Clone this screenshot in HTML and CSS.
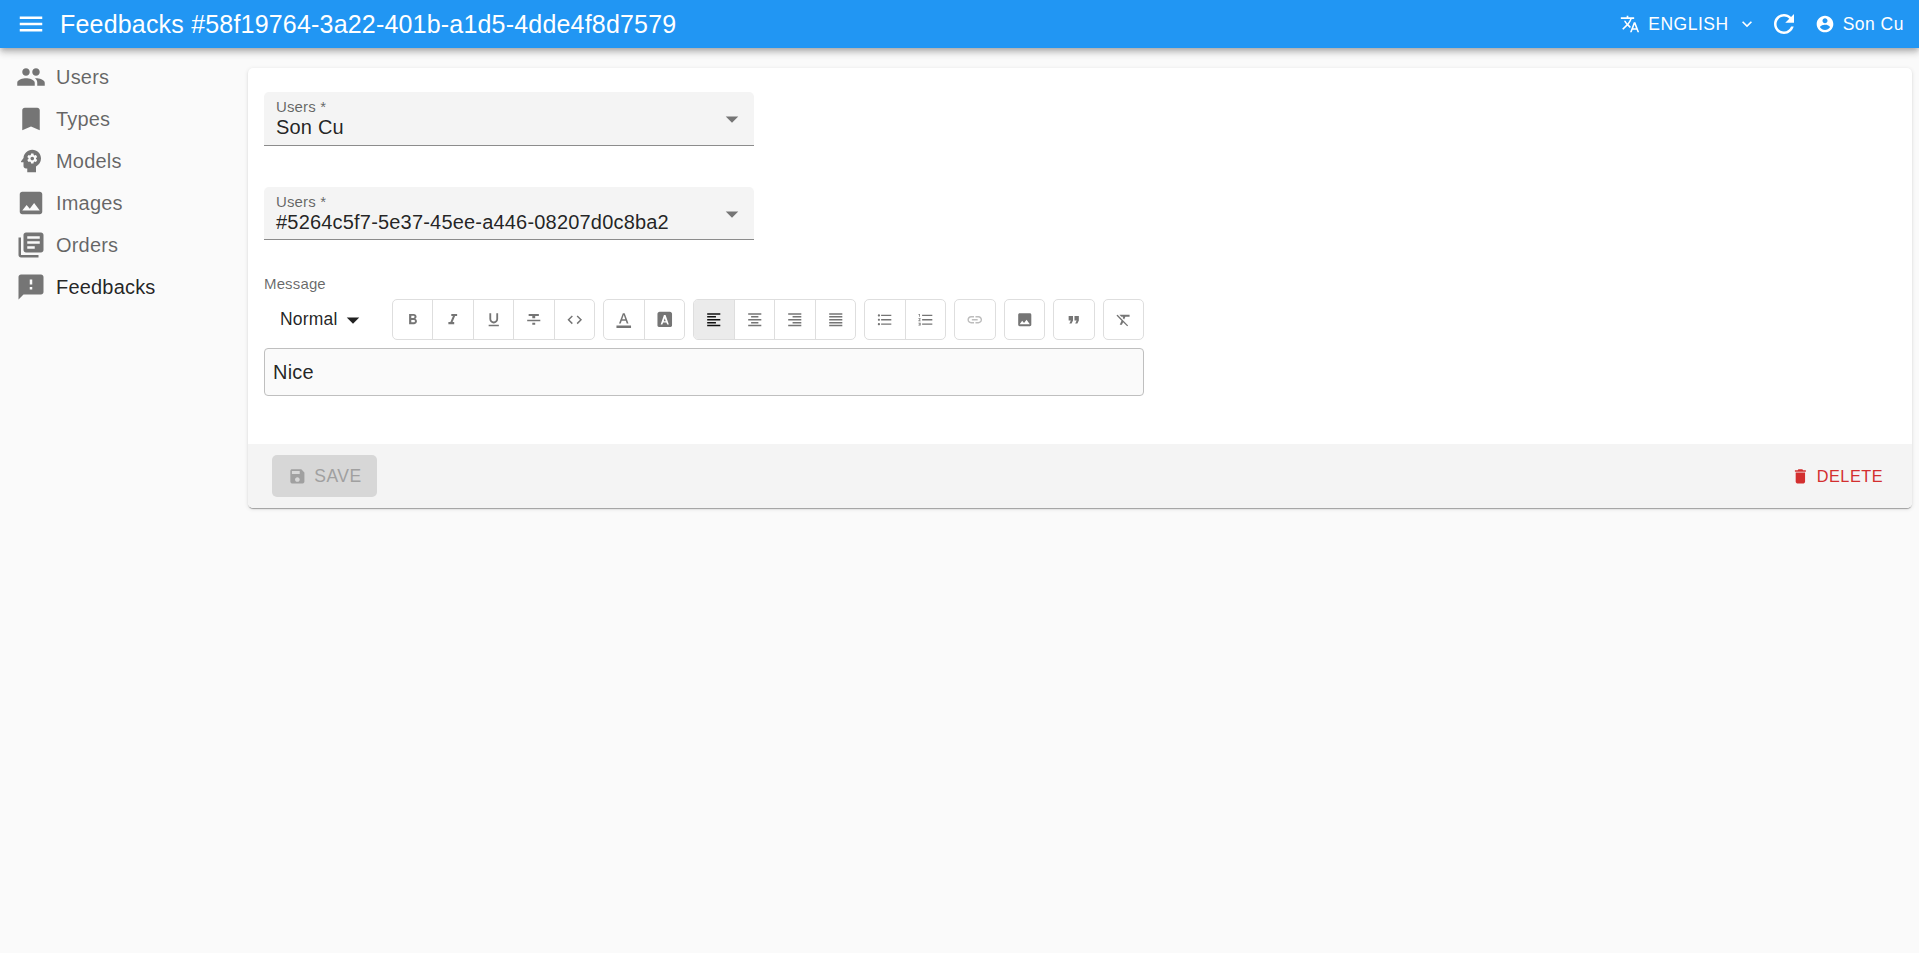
FILE: index.html
```html
<!DOCTYPE html>
<html lang="en">
<head>
<meta charset="utf-8">
<title>Feedbacks</title>
<link rel="stylesheet" href="styles.css">
</head>
<body>
<header class="appbar">
  <svg class="icon icon-lg" viewBox="0 0 24 24"><path d="M3 18h18v-2H3v2zm0-5h18v-2H3v2zm0-7v2h18V6H3z"/></svg>
  <h1 class="title">Feedbacks #58f19764-3a22-401b-a1d5-4dde4f8d7579</h1>
  <div class="language">
    <svg class="icon icon-md" viewBox="0 0 24 24"><path d="M12.87 15.07l-2.54-2.51.03-.03c1.74-1.94 2.98-4.17 3.71-6.53H17V4h-7V2H8v2H1v1.99h11.17C11.5 7.92 10.44 9.75 9 11.35 8.07 10.32 7.3 9.19 6.69 8h-2c.73 1.63 1.73 3.17 2.98 4.56l-5.09 5.02L4 19l5-5 3.11 3.11zM18.5 10h-2L12 22h2l1.12-3h4.75L21 22h2zm-2.62 7l1.62-4.33L19.12 17z"/></svg>
    <span>ENGLISH</span>
    <svg class="icon icon-md" viewBox="0 0 24 24"><path d="M16.59 8.59L12 13.17 7.41 8.59 6 10l6 6 6-6z"/></svg>
  </div>
  <svg class="icon icon-lg refresh" viewBox="0 0 24 24"><path d="M17.65 6.35C16.2 4.9 14.21 4 12 4c-4.42 0-7.99 3.58-7.99 8s3.57 8 7.99 8c3.73 0 6.84-2.55 7.73-6h-2.08c-.82 2.33-3.04 4-5.65 4-3.31 0-6-2.69-6-6s2.69-6 6-6c1.66 0 3.14.69 4.22 1.78L13 11h7V4z"/></svg>
  <div class="account">
    <svg class="icon icon-md" viewBox="0 0 24 24"><path d="M12 2C6.48 2 2 6.48 2 12s4.48 10 10 10 10-4.48 10-10S17.52 2 12 2zm0 3c1.66 0 3 1.34 3 3s-1.34 3-3 3-3-1.34-3-3 1.34-3 3-3zm0 14.2c-2.5 0-4.71-1.28-6-3.22.03-1.99 4-3.08 6-3.08 1.99 0 5.97 1.09 6 3.08-1.29 1.94-3.5 3.22-6 3.22z"/></svg>
    <span>Son Cu</span>
  </div>
</header>
<div class="layout">
  <nav class="sidebar">
    <a class="nav-item"><svg class="icon icon-lg" viewBox="0 0 24 24"><path d="M16 11c1.66 0 2.99-1.34 2.99-3S17.66 5 16 5c-1.66 0-3 1.34-3 3s1.34 3 3 3zm-8 0c1.66 0 2.99-1.34 2.99-3S9.66 5 8 5C6.34 5 5 6.34 5 8s1.34 3 3 3zm0 2c-2.33 0-7 1.17-7 3.5V19h14v-2.5c0-2.33-4.67-3.5-7-3.5zm8 0c-.29 0-.62.02-.97.05 1.16.84 1.97 1.97 1.97 3.45V19h6v-2.5c0-2.33-4.67-3.5-7-3.5z"/></svg><span>Users</span></a>
    <a class="nav-item"><svg class="icon icon-lg" viewBox="0 0 24 24"><path d="M17 3H7c-1.1 0-1.99.9-1.99 2L5 21l7-3 7 3V5c0-1.1-.9-2-2-2z"/></svg><span>Types</span></a>
    <a class="nav-item"><svg class="icon icon-lg" viewBox="0 0 24 24"><path d="M13 8.57c-.79 0-1.43.64-1.43 1.43s.64 1.43 1.43 1.43 1.43-.64 1.43-1.43-.64-1.43-1.43-1.43z"/><path d="M13 3C9.25 3 6.2 5.94 6.02 9.64L4.1 12.2c-.25.33-.01.8.4.8H6v3c0 1.1.9 2 2 2h1v3h7v-4.68c2.36-1.12 4-3.53 4-6.32 0-3.87-3.13-7-7-7zm3 7c0 .13-.01.26-.02.39l.83.66c.08.06.1.16.05.25l-.8 1.39c-.05.09-.16.12-.24.09l-.99-.4c-.21.16-.43.29-.67.39L14 13.83c-.01.1-.1.17-.2.17h-1.6c-.1 0-.18-.07-.2-.17l-.15-1.06c-.25-.1-.47-.23-.68-.39l-.99.4c-.09.03-.2 0-.25-.09l-.8-1.39c-.05-.08-.03-.19.05-.25l.84-.66c-.01-.13-.02-.26-.02-.39s.02-.27.04-.39l-.85-.66c-.08-.06-.1-.16-.05-.26l.8-1.38c.05-.09.15-.12.24-.09l1 .4c.2-.15.43-.29.67-.39L12 6.17c.02-.1.1-.17.2-.17h1.6c.1 0 .18.07.2.17l.15 1.06c.24.1.46.23.67.39l1-.4c.09-.03.2 0 .24.09l.8 1.38c.05.09.03.2-.05.26l-.85.66c.03.12.04.25.04.39z"/></svg><span>Models</span></a>
    <a class="nav-item"><svg class="icon icon-lg" viewBox="0 0 24 24"><path d="M21 19V5c0-1.1-.9-2-2-2H5c-1.1 0-2 .9-2 2v14c0 1.1.9 2 2 2h14c1.1 0 2-.9 2-2zM8.5 13.5l2.5 3.01L14.5 12l4.5 6H5z"/></svg><span>Images</span></a>
    <a class="nav-item"><svg class="icon icon-lg" viewBox="0 0 24 24"><path d="M4 6H2v14c0 1.1.9 2 2 2h14v-2H4zm16-4H8c-1.1 0-2 .9-2 2v12c0 1.1.9 2 2 2h12c1.1 0 2-.9 2-2V4c0-1.1-.9-2-2-2zm-1 9H9V9h10zm-4 4H9v-2h6zm4-8H9V5h10z"/></svg><span>Orders</span></a>
    <a class="nav-item active"><svg class="icon icon-lg" viewBox="0 0 24 24"><path d="M20 2H4c-1.1 0-1.99.9-1.99 2L2 22l4-4h14c1.1 0 2-.9 2-2V4c0-1.1-.9-2-2-2zm-7 12h-2v-2h2zm0-4h-2V6h2z"/></svg><span>Feedbacks</span></a>
  </nav>
  <main class="card">
    <div class="form">
      <div class="field">
        <div class="field-text"><label>Users *</label><span class="value">Son Cu</span></div>
        <svg class="icon icon-lg" viewBox="0 0 24 24"><path d="M7 10l5 5 5-5z"/></svg>
      </div>
      <div class="field field-second">
        <div class="field-text"><label>Users *</label><span class="value">#5264c5f7-5e37-45ee-a446-08207d0c8ba2</span></div>
        <svg class="icon icon-lg" viewBox="0 0 24 24"><path d="M7 10l5 5 5-5z"/></svg>
      </div>
      <div class="message-label">Message</div>
      <div class="tools">
        <div class="format"><span>Normal</span><svg class="icon icon-lg" viewBox="0 0 24 24"><path d="M7 10l5 5 5-5z"/></svg></div>
        <div class="group w5">
          <button><svg class="icon" viewBox="0 0 24 24"><path d="M15.6 10.79c.97-.67 1.65-1.77 1.65-2.79 0-2.26-1.75-4-4-4H7v14h7.04c2.09 0 3.71-1.7 3.71-3.79 0-1.52-.86-2.82-2.15-3.42zM10 6.5h3c.83 0 1.5.67 1.5 1.5s-.67 1.5-1.5 1.5h-3zm3.5 9H10v-3h3.5c.83 0 1.5.67 1.5 1.5s-.67 1.5-1.5 1.5z"/></svg></button>
          <button><svg class="icon" viewBox="0 0 24 24"><path d="M10 4v3h2.21l-3.42 8H6v3h8v-3h-2.21l3.42-8H18V4z"/></svg></button>
          <button><svg class="icon" viewBox="0 0 24 24"><path d="M12 17c3.31 0 6-2.69 6-6V3h-2.5v8c0 1.93-1.57 3.5-3.5 3.5S8.5 12.93 8.5 11V3H6v8c0 3.31 2.69 6 6 6zm-7 2v2h14v-2z"/></svg></button>
          <button><svg class="icon" viewBox="0 0 24 24"><path d="M10 19h4v-3h-4zM5 4v3h5v3h4V7h5V4zM3 14h18v-2H3z"/></svg></button>
          <button><svg class="icon" viewBox="0 0 24 24"><path d="M9.4 16.6L4.8 12l4.6-4.6L8 6l-6 6 6 6zm5.2 0l4.6-4.6-4.6-4.6L16 6l6 6-6 6z"/></svg></button>
        </div>
        <div class="group w2">
          <button><svg class="icon" viewBox="0 0 24 24"><path d="M2 20h20v4H2zM5.490 17h2.420l1.270-3.580h5.650L16.090 17h2.420L13.250 3h-2.500zm4.420-5.610l2.030-5.790h.12l2.030 5.790z"/></svg></button>
          <button><svg class="icon" viewBox="0 0 24 24"><path d="M10.630 14h2.740L12 9.800zM19 1H5C3.340 1 2 2.340 2 4v16c0 1.100.9 2 2 2h16c1.100 0 2-.9 2-2V4c0-1.660-1.340-3-3-3zm-3.500 17.500L14.200 15.700H9.800l-1.100 2.800H6.400L10.900 5.500h2.200l4.500 13z"/></svg></button>
        </div>
        <div class="group w4">
          <button class="selected"><svg class="icon" viewBox="0 0 24 24"><path d="M15 15H3v2h12zm0-8H3v2h12zM3 13h18v-2H3zm0 8h18v-2H3zM3 3v2h18V3z"/></svg></button>
          <button><svg class="icon" viewBox="0 0 24 24"><path d="M7 15v2h10v-2zm-4 6h18v-2H3zm0-8h18v-2H3zm4-6v2h10V7zM3 3v2h18V3z"/></svg></button>
          <button><svg class="icon" viewBox="0 0 24 24"><path d="M3 21h18v-2H3zm6-4h12v-2H9zm-6-4h18v-2H3zm6-4h12V7H9zM3 3v2h18V3z"/></svg></button>
          <button><svg class="icon" viewBox="0 0 24 24"><path d="M3 21h18v-2H3zm0-4h18v-2H3zm0-4h18v-2H3zm0-4h18V7H3zm0-6v2h18V3z"/></svg></button>
        </div>
        <div class="group w2">
          <button><svg class="icon" viewBox="0 0 24 24"><path d="M4 10.5c-.83 0-1.5.67-1.5 1.5s.67 1.5 1.5 1.5 1.5-.67 1.5-1.5-.67-1.5-1.5-1.5zm0-6c-.83 0-1.5.67-1.5 1.5S3.17 7.5 4 7.5 5.5 6.83 5.5 6 4.83 4.5 4 4.5zm0 12c-.83 0-1.5.68-1.5 1.5s.68 1.5 1.5 1.5 1.5-.68 1.5-1.5-.67-1.5-1.5-1.5zM7 19h14v-2H7zm0-6h14v-2H7zm0-8v2h14V5z"/></svg></button>
          <button><svg class="icon" viewBox="0 0 24 24"><path d="M2 17h2v.5H3v1h1v.5H2v1h3v-4H2zm1-9h1V4H2v1h1zm-1 3h1.8L2 13.1v.9h3v-1H3.2L5 10.9V10H2zm5-6v2h14V5zm0 14h14v-2H7zm0-6h14v-2H7z"/></svg></button>
        </div>
        <div class="group w42"><button class="disabled"><svg class="icon" viewBox="0 0 24 24"><path d="M3.9 12c0-1.71 1.39-3.1 3.1-3.1h4V7H7c-2.76 0-5 2.24-5 5s2.24 5 5 5h4v-1.9H7c-1.71 0-3.1-1.39-3.1-3.1zM8 13h8v-2H8zm9-6h-4v1.9h4c1.71 0 3.1 1.39 3.1 3.1s-1.39 3.1-3.1 3.1h-4V17h4c2.76 0 5-2.24 5-5s-2.24-5-5-5z"/></svg></button></div>
        <div class="group w41"><button><svg class="icon" viewBox="0 0 24 24"><path d="M21 19V5c0-1.1-.9-2-2-2H5c-1.1 0-2 .9-2 2v14c0 1.1.9 2 2 2h14c1.1 0 2-.9 2-2zM8.5 13.5l2.5 3.01L14.5 12l4.5 6H5z"/></svg></button></div>
        <div class="group w42"><button><svg class="icon" viewBox="0 0 24 24"><path d="M6 17h3l2-4V7H5v6h3zm8 0h3l2-4V7h-6v6h3z"/></svg></button></div>
        <div class="group w41"><button><svg class="icon" viewBox="0 0 24 24"><path d="M3.27 5L2 6.27l6.97 6.97L6.5 19h3l1.57-3.66L16.73 21 18 19.73 3.55 5.27zM6 5v.18L8.82 8h2.4l-.72 1.68 2.1 2.1L14.21 8H20V5z"/></svg></button></div>
      </div>
      <div class="editor">Nice</div>
    </div>
    <footer class="actions">
      <button class="save"><svg class="icon icon-sm" viewBox="0 0 24 24"><path d="M17 3H5c-1.11 0-2 .9-2 2v14c0 1.1.89 2 2 2h14c1.1 0 2-.9 2-2V7zm-5 16c-1.66 0-3-1.34-3-3s1.34-3 3-3 3 1.34 3 3-1.34 3-3 3zm3-10H5V5h10z"/></svg><span>SAVE</span></button>
      <button class="delete"><svg class="icon icon-sm" viewBox="0 0 24 24"><path d="M6 19c0 1.1.9 2 2 2h8c1.1 0 2-.9 2-2V7H6zM19 4h-3.5l-1-1h-5l-1 1H5v2h14z"/></svg><span>DELETE</span></button>
    </footer>
  </main>
</div>
</body>
</html>
```
FILE: styles.css
```css
* { box-sizing: border-box; }
body {
  margin: 0;
  min-height: 100vh;
  background: #fafafa;
  color: rgba(0, 0, 0, 0.87);
  font-family: "Liberation Sans", Arial, sans-serif;
  font-size: 20px;
}
button { font: inherit; color: inherit; border: 0; background: none; padding: 0; margin: 0; }
.icon { width: 17.5px; height: 17.5px; fill: currentColor; flex: none; display: block; }
.icon-sm { width: 18.75px; height: 18.75px; }
.icon-md { width: 20px; height: 20px; }
.icon-lg { width: 30px; height: 30px; }

.appbar {
  position: relative;
  height: 48px;
  display: flex;
  align-items: center;
  padding: 0 15px 0 16px;
  background: #2196f3;
  color: #fff;
  box-shadow: 0 2px 5px -1px rgba(0,0,0,.2), 0 5px 6px rgba(0,0,0,.14), 0 1px 12px rgba(0,0,0,.12);
}
.title { flex: 1; margin: 0 0 0 14px; font-size: 25px; font-weight: 400; letter-spacing: 0.19px; line-height: 40px; }
.language, .account { display: flex; align-items: center; gap: 8px; font-size: 17.5px; letter-spacing: 0.5px; }
.refresh { margin: 0 16px 0 12px; }

.layout { display: flex; align-items: flex-start; padding-right: 7px; }
.sidebar { width: 248px; padding-top: 8px; }
.nav-item {
  height: 42px;
  display: flex;
  align-items: center;
  gap: 10px;
  padding-left: 16px;
  color: rgba(0, 0, 0, 0.6);
  letter-spacing: 0.19px;
}
.nav-item .icon { color: #757575; }
.nav-item.active { color: rgba(0, 0, 0, 0.87); }

.card {
  flex: 1;
  margin-top: 20px;
  background: #fff;
  border-radius: 5px;
  box-shadow: 0 2px 1px -1px rgba(0,0,0,.2), 0 1px 1px rgba(0,0,0,.14), 0 1px 4px rgba(0,0,0,.12);
}
.form { padding: 24px 16px 48px; height: 376px; }
.field {
  width: 490px;
  height: 54px;
  display: flex;
  justify-content: space-between;
  align-items: center;
  padding: 0 7px 0 12px;
  background: #f4f4f4;
  border-bottom: 1px solid #8c8c8c;
  border-radius: 5px 5px 0 0;
}
.field-second { margin-top: 41px; height: 53px; }
.field .icon { color: #757575; }
.field-second .icon { margin-top: 2px; }
.field-text { display: flex; flex-direction: column; align-self: flex-start; padding-top: 6px; }
.field-text label, .message-label { font-size: 15px; line-height: 18px; letter-spacing: 0.14px; color: rgba(0, 0, 0, 0.6); }
.value { line-height: 22px; letter-spacing: 0.19px; }
.message-label { margin-top: 35px; height: 24px; line-height: 18px; }

.tools { display: flex; gap: 8px; height: 41px; }
.format { width: 120px; display: flex; align-items: center; padding-left: 16px; font-size: 17.5px; letter-spacing: 0.19px; }
.group { display: flex; border: 1px solid #dedede; border-radius: 5px; overflow: hidden; color: #757575; }
.group button { flex: 1; display: flex; align-items: center; justify-content: center; }
.group button + button { border-left: 1px solid #dedede; }
.group .selected { background: #ebebeb; color: #111; }
.group .disabled { color: #bdbdbd; }
.w5 { width: 203px; }
.w4 { width: 163px; }
.w2 { width: 82px; }
.w42 { width: 42px; }
.w41 { width: 41px; }

.editor {
  width: 880px;
  height: 48px;
  margin-top: 8px;
  padding-left: 8px;
  line-height: 46px;
  letter-spacing: 0.19px;
  background: #fafafa;
  border: 1px solid #bfbfbf;
  border-radius: 4px;
}

.actions {
  height: 64px;
  display: flex;
  justify-content: space-between;
  align-items: center;
  padding: 0 29px 0 24px;
  background: #f4f4f4;
  border-radius: 0 0 5px 5px;
}
.actions button { display: flex; align-items: center; height: 42px; letter-spacing: 0.5px; }
.actions .save { width: 105px; padding-left: 15.5px; gap: 8px; font-size: 17.5px; background: #d7d7d7; color: #a0a0a0; border-radius: 5px; }
.actions .delete { gap: 7px; font-size: 16.25px; color: #d32f2f; }
```
